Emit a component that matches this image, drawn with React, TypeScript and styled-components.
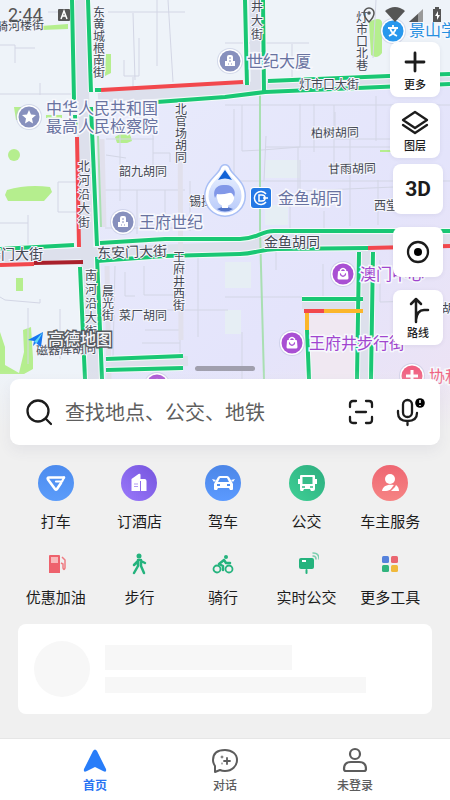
import React from "react";
import styled, { createGlobalStyle } from "styled-components";

const GlobalStyle = createGlobalStyle`
  *, *::before, *::after { box-sizing: border-box; }
  body {
    margin: 0;
    background: #f0f0f0;
    font-family: "Noto Sans CJK SC", "Noto Sans", sans-serif;
    color: #1c1c1c;
  }
  button { font: inherit; color: inherit; border: 0; padding: 0; cursor: pointer; }
`;

const Page = styled.main`
  display: flex;
  flex-direction: column;
  min-height: 100vh;
  background: #f0f0f0;
`;

const MapArea = styled.section`
  position: relative;
  height: 430px;
  overflow: hidden;
  background: #eef2fa;
  &::after {
    content: "";
    position: absolute;
    inset: auto 0 0;
    height: 60px;
    background: linear-gradient(rgba(240, 240, 240, 0), #f0f0f0);
  }
`;

const MapSvg = styled.svg`
  display: block;
  width: 100%;
  height: 100%;
`;

const StatusBar = styled.header`
  position: absolute;
  inset: 0 0 auto;
  display: flex;
  align-items: center;
  justify-content: space-between;
  height: 30px;
  padding: 0 8px;
  color: #555;
`;

const StatusGroup = styled.div<{ $gap: number }>`
  display: flex;
  align-items: center;
  gap: ${(p) => p.$gap}px;
`;

const Clock = styled.time`
  font: 18px/20px Roboto, sans-serif;
`;

const Tools = styled.div`
  position: absolute;
  top: 42px;
  right: 7px;
  display: flex;
  flex-direction: column;
  align-items: flex-end;
  gap: 13px;
`;

const ToolGroup = styled.div<{ $inset?: boolean }>`
  display: flex;
  flex-direction: column;
  gap: 6px;
  margin-right: ${(p) => (p.$inset ? 3 : 0)}px;
  margin-bottom: ${(p) => (p.$inset ? -7 : 0)}px;
`;

const Tool = styled.button<{ $tall?: boolean }>`
  display: flex;
  flex-direction: column;
  align-items: center;
  justify-content: center;
  width: 50px;
  height: ${(p) => (p.$tall ? 55 : 50)}px;
  border-radius: 8px;
  background: #fff;
  font-size: 11px;
  font-weight: 500;
  line-height: 16px;
  box-shadow: 0 1px 4px rgba(50, 50, 90, 0.08);
`;

const ToolBig = styled.span`
  font: 700 21px/26px Roboto, sans-serif;
`;

const Handle = styled.div`
  position: absolute;
  top: 366px;
  left: 50%;
  width: 60px;
  height: 5px;
  margin-left: -30px;
  border-radius: 3px;
  background: #a09fad;
`;

const Sheet = styled.div`
  position: relative;
  z-index: 1;
  display: flex;
  flex: 1;
  flex-direction: column;
  margin-top: -51px;
`;

const SearchBox = styled.form`
  display: flex;
  align-items: center;
  gap: 13px;
  height: 66px;
  margin: 0 10px;
  padding: 0 12px 0 14px;
  border-radius: 9px;
  background: #fff;
  box-shadow: 0 6px 14px rgba(70, 70, 110, 0.07);
`;

const SearchInput = styled.input`
  flex: 1;
  min-width: 0;
  padding: 0;
  border: 0;
  outline: 0;
  background: none;
  font: 20px/30px "Noto Sans CJK SC", sans-serif;
  color: #222;
  &::placeholder { color: #5e5e5e; opacity: 1; }
`;

const IconButton = styled.button`
  display: flex;
  width: 36px;
  height: 36px;
  align-items: center;
  justify-content: center;
  background: none;
`;

const Services = styled.div`
  display: grid;
  grid-template-columns: repeat(5, 1fr);
  row-gap: 19px;
  padding: 20px 18px 0 14px;
`;

const Service = styled.button`
  display: flex;
  flex-direction: column;
  align-items: center;
  background: none;
  font-size: 15px;
  line-height: 24px;
  white-space: nowrap;
`;

const Badge = styled.span<{ $fill: string }>`
  display: flex;
  width: 36px;
  height: 36px;
  margin-bottom: 8px;
  border-radius: 50%;
  background: ${(p) => p.$fill};
`;

const PlainIcon = styled.span`
  display: flex;
  width: 24px;
  height: 24px;
  margin-bottom: 9px;
`;

const Skeleton = styled.section`
  display: flex;
  align-items: center;
  gap: 15px;
  height: 90px;
  margin: 15px 18px 0;
  padding: 0 16px;
  border-radius: 8px;
  background: #fff;
`;

const SkeletonCircle = styled.div`
  flex: none;
  width: 56px;
  height: 56px;
  border-radius: 50%;
  background: #f7f7f7;
`;

const SkeletonLines = styled.div`
  display: flex;
  flex: 1;
  flex-direction: column;
  gap: 7px;
`;

const SkeletonBar = styled.div<{ $width: number; $height: number }>`
  width: ${(p) => p.$width}%;
  height: ${(p) => p.$height}px;
  background: #f7f7f7;
`;

const TabBar = styled.nav`
  display: grid;
  grid-template-columns: repeat(3, 1fr);
  height: 62px;
  margin-top: auto;
  padding: 8px 30px 0;
  border-top: 1px solid #e6e6e6;
  background: #fff;
`;

const Tab = styled.a<{ $active?: boolean }>`
  display: flex;
  flex-direction: column;
  align-items: center;
  gap: 1px;
  color: ${(p) => (p.$active ? "#2a75f3" : "#5c5c5c")};
  font-size: 12px;
  font-weight: ${(p) => (p.$active ? 700 : 500)};
  line-height: 18px;
  text-decoration: none;
`;

const Street = styled.text`
  font-size: 12px;
  fill: #454954;
  stroke: #f4f5fc;
  stroke-width: 2px;
  paint-order: stroke;
`;

const Avenue = styled(Street)`
  font-size: 14px;
`;

const Place = styled.text<{ $color?: string }>`
  font-size: 16px;
  fill: ${(p) => p.$color ?? "#6872a0"};
  stroke: #f7f8fd;
  stroke-width: 3px;
  paint-order: stroke;
`;

const Brand = styled.text`
  font-size: 16px;
  font-weight: 500;
  fill: #f4f5f8;
  stroke: #575b60;
  stroke-width: 3px;
  paint-order: stroke;
`;

function Vertical({ text, x, y, step = 12 }: { text: string; x: number; y: number; step?: number }) {
  return (
    <Street textAnchor="middle">
      {[...text].map((c, i) => (
        <tspan key={i} x={x} y={y + i * step}>{c}</tspan>
      ))}
    </Street>
  );
}

function Pin({ x, y, color, children }: { x: number; y: number; color: string; children?: React.ReactNode }) {
  return (
    <g transform={`translate(${x} ${y})`}>
      <circle r="13" fill="#b9bfdc" opacity=".5" />
      <circle r="12" fill="#fff" />
      <circle r="10.500" fill={color} />
      {children}
    </g>
  );
}

const Tower = () => (
  <>
    <path d="M-5 5V0h2v-4q0-2 2-2h2q2 0 2 2v4h2v5Z" fill="#fff" />
    <path d="M-1-3h2M-1 0h2M-2 3h1M1 3h1" stroke="#8790bd" strokeWidth="1.200" />
  </>
);
const Bag = () => (
  <>
    <path d="M-2.500-3v-1q2.500-3 5 0v1" fill="none" stroke="#fff" strokeWidth="1.500" />
    <path d="M-4-3H4q1 0 1 1l.5 6q0 1.500-1.500 1.500h-8q-1.500 0-1.500-1.500L-5-2q0-1 1-1Z" fill="#fff" />
    <path d="M-2.500 0c.5 3 4.500 3 5 0" fill="none" stroke="#a950d3" strokeWidth="1.300" strokeLinecap="round" />
  </>
);

const dropPath = "M225 167q2 0 3 3c3 7 15 12 15 26a18 18 0 0 1-36 0c0-14 12-19 15-26q1-3 3-3Z";

const green = "#19c774";
const greenRoads = [
  "M72 0 74 100M75 115 76 134M88 0 91 92M91 107 97 246M97 257 102 379M80 267 85 379",
  "M95 90H101M157 102 225 97 265 92 450 84M268 81 389 76 450 74",
  "M245 0 247 85M263 0 264 92",
  "M0 249 74 245M100 243 165 239 240 239C258 239 260 231 274 231H450",
  "M97 261 165 256 240 254C256 254 259 249 277 249L368 248",
  "M359 252 357 379M373 252 371 379M302 299H363M307 330 309 379",
  "M106 359 183 356M106 370 183 368",
];

function CityMap() {
  return (
    <MapSvg viewBox="0 0 450 430" preserveAspectRatio="xMidYMin slice" role="img" aria-label="地图">
      <defs>
        <linearGradient id="district" x1="0" y1="0" x2="1" y2="1">
          <stop offset="0" stopColor="#e8ebfb" />
          <stop offset=".6" stopColor="#e4e4fb" />
          <stop offset="1" stopColor="#eee3f3" />
        </linearGradient>
        <linearGradient id="drop" x1="0" y1="0" x2="0" y2="1">
          <stop stopColor="#eef4ff" />
          <stop offset="1" stopColor="#b7c9fa" />
        </linearGradient>
      </defs>
      <path d="M0 0H450V430H0Z" fill="#eef3f9" />
      <path d="M95 104 265 92 450 84V430H104Z" fill="url(#district)" />
      <path d="M265 160h35v18h-35ZM225 262h26v26h-26ZM225 310h16v24h-16ZM265 205h23v20h-23Z" fill="#e6eef4" />
      <path d="M310 315h45v65h-45Z" fill="#f0e8f2" />

      <g fill="#b5ee8e">
        <path d="m41 26 27-2v5l-27 1ZM106 54h5v19l-6 3ZM115 137l5-3h10l2 7-5 2h-10Z" />
        <circle cx="14" cy="155" r="6" />
        <path d="M7 190q20-6 43-3l2 5-8 9H8l-3-6ZM369 22q11-6 13 0v31q-5 7-11 2ZM16 278h7v13h-7Z" />
        <path d="M0 332l5 15v18l14 8 5-21-1-22 8-3 2 31v11l-9 5H0ZM380 150h12v2h-12ZM46 115h16v3H46ZM14 107h7v13h-5Z" />
      </g>

      <g fill="none" stroke="#d3d6e5" strokeWidth="1">
        <path d="M0 45h15v18M15 48h20M48 12h26M0 94h72M40 83v12M108 12h77M133 13l2 67M157 0v66M168 0l5 82M124 60v16h15V38M133 77v14M106 139h48M106 155l20 3M120 133v68M153 105v60M153 153h17v9M58 182h19v30H58ZM0 223h28M28 215v30M0 297l5 3 35 3v-4M28 308v56M60 309v50" />
        <path d="M225 43h84M292 44v38M376 0l-3 58M225 105h225M234 109v68M242 105v46l20-1 38-3v-43M314 104v48M334 105v70M266 136l-2 45M265 147h130M335 112v27h62M376 96v45M225 181h225M298 147v48M300 160v31l94-4M350 134v92M378 180v45M290 195v37M276 232v38M380 260v42l40-1" />
        <path d="M105 190h80M137 190v44M165 190v33M190 181v50M105 228h80M115 266l-2 91M125 272v24h10M144 266v29h42M118 310h110M145 330h35v23M198 257v80M225 297h77M324 211v21M323 264v36M242 332v47M142 343h38" />
      </g>

      <g fill="none" stroke="#dde0ec" strokeLinejoin="round">
        <path d="M80 0 87 250 93 379" strokeWidth="13" />
        <path d="M98 97 254 87 450 79M0 257 90 253 245 247 270 240H450" strokeWidth="11" />
        <path d="M254 0 256 87M366 248 364 379M106 364 188 361" strokeWidth="10" />
        <path d="M302 305H365" strokeWidth="8" />
      </g>
      <path d="M180 105 181 340M102 139 104 227M107 266 109 379" fill="none" stroke="#e1e0ec" strokeWidth="5" />
      <path d="M260 92V230L264 379M98 136 101 227" fill="none" stroke="#a9dfb2" strokeWidth="2" />

      <g fill="none" strokeLinejoin="round">
        {greenRoads.map((d) => <path key={d} d={d} stroke="#f3fbf8" strokeWidth="6" />)}
        {greenRoads.map((d) => <path key={d} d={d} stroke={green} strokeWidth="4" />)}
        <path d="M101 90 243 82M77 137 79 247M0 265 34 264M368 248 450 246M304 311H324" stroke="#f2484d" strokeWidth="4" />
        <path d="M34 263 83 262" stroke="#a9202c" strokeWidth="4" />
        <path d="M324 311H363M307 313V330" stroke="#fbb62b" strokeWidth="4" />
      </g>

      <Street x="-4" y="30" transform="rotate(-2 20 26)">骑河楼街</Street>
      <Vertical text="东黄城根南街" x={99} y={17} />
      <Vertical text="北官场胡同" x={181} y={114} />
      <Vertical text="北河沿大街" x={84} y={171} step={14} />
      <Vertical text="井大街" x={257} y={11} step={14} />
      <Vertical text="灯市口北巷" x={362} y={22} />
      <Vertical text="王府井西街" x={179} y={262} />
      <Vertical text="南河沿大街" x={91} y={280} step={14} />
      <Vertical text="晨光街" x={108} y={296} />
      <Street x="119" y="176">韶九胡同</Street>
      <Street x="299" y="89">灯市口大街</Street>
      <Street x="311" y="137" transform="rotate(-1 335 132)">柏树胡同</Street>
      <Street x="328" y="173" transform="rotate(-1 352 168)">甘雨胡同</Street>
      <Street x="374" y="210">西堂</Street>
      <Street x="189" y="206">锡拉</Street>
      <Street x="119" y="320">菜厂胡同</Street>
      <Street x="36" y="354" transform="rotate(-2 65 349)">磁器库胡同</Street>
      <Street x="442" y="313">胡</Street>
      <Avenue x="-13" y="259">安门大街</Avenue>
      <Avenue x="97" y="257" transform="rotate(-2 131 252)">东安门大街</Avenue>
      <Avenue x="264" y="247">金鱼胡同</Avenue>

      <Place x="46" y="114">中华人民共和国</Place>
      <Place x="46" y="132">最高人民检察院</Place>
      <Place x="247" y="67">世纪大厦</Place>
      <Place x="139" y="228">王府世纪</Place>
      <Place x="278" y="204">金鱼胡同</Place>
      <Place x="409" y="36" $color="#268fe0">景山学校</Place>
      <Place x="360" y="280" $color="#a145cf">澳门中心</Place>
      <Place x="309" y="349" $color="#a145cf">王府井步行街</Place>
      <Place x="429" y="382" $color="#ef5d7d">协和医院</Place>

      <Pin x={29} y={117} color="#8790bd">
        <path d="m0-7 2 4.500 5 .5-4 3.500 1 5L0 4l-4 2.500 1-5-4-3.500 5-.5Z" fill="#fff" />
      </Pin>
      <Pin x={230} y={61} color="#8790bd"><Tower /></Pin>
      <Pin x={123} y={222} color="#8790bd"><Tower /></Pin>
      <Pin x={393} y={31} color="#2998ed">
        <path d="M-5-3H5M0-6v3M-3-3c1 4 3 6 7 8M3-3c-1 4-3 6-7 8" fill="none" stroke="#fff" strokeWidth="1.800" />
      </Pin>
      <Pin x={343} y={274} color="#a950d3"><Bag /></Pin>
      <Pin x={292} y={343} color="#a950d3"><Bag /></Pin>
      <Pin x={157} y={385} color="#a950d3"><Bag /></Pin>
      <Pin x={412} y={376} color="#f06080">
        <path d="M-6 0H6M0-6V6" stroke="#fff" strokeWidth="3" />
      </Pin>

      <g transform="translate(261 198)">
        <rect x="-11" y="-11" width="22" height="22" rx="4" fill="#fff" />
        <rect x="-10" y="-10" width="20" height="20" rx="3" fill="#2579e5" />
        <path d="M5-4A6.500 6.500 0 1 0 5 4M-2-3V3H1C5 3 5-3 1-3ZM2 0H7" fill="none" stroke="#fff" strokeWidth="1.500" />
      </g>

      <path d={dropPath} fill="#fff" stroke="#a9bff5" strokeWidth="6" />
      <path d={dropPath} fill="url(#drop)" stroke="#fff" strokeWidth="3" />
      <path d="m225 170 7 10q-7-3-14 0Z" fill="#1263d6" />
      <path d="M217 209q8-4 16 0-8 5-16 0Z" fill="#5576c9" />
      <path d="M217 193h17v6q-2 7-9 7t-8-8Z" fill="#fff" />
      <path d="M215 198c-3-8 2-14 10-13 7-1 12 6 9 12q-2-5-5-4-7 2-12 1Z" fill="#8298e8" />
      <path d="M222 204h6v4h-6Z" fill="#fff" />

      <path d="m28 340 15-8-2 15-5-4-3 3 1-5Z" fill="#1676f2" />
      <path d="m34 342 9-10-6 11Z" fill="#62d9f4" />
      <Brand x="48" y="345">高德地图</Brand>
    </MapSvg>
  );
}

const line = { fill: "none", stroke: "currentColor", strokeLinecap: "round", strokeLinejoin: "round" } as const;

const services = [
  {
    label: "打车", fill: "linear-gradient(#4c8bee, #5b9cfa)",
    icon: <><path d="M26 12.500H11q-2 0-1 2l7 9.500q1 1 2 0l4-6" {...line} strokeWidth="2.600" /><path d="m26 12.500-2 4h-6" {...line} strokeWidth="2.200" /></>,
  },
  {
    label: "订酒店", fill: "linear-gradient(225deg, #7554dd, #9a79fb)",
    icon: <><path d="M10.500 26V14l7-5q2-1 2 1v4h4q2 0 2 2v10Z" fill="#fff" /><path d="M19.500 16v10" stroke="#8d6bec" /><path d="M13 19h4M13 21.500h4" stroke="#b19af3" /></>,
  },
  {
    label: "驾车", fill: "linear-gradient(#4c86e7, #5b9aff)",
    icon: <><path d="M10 17l3-5q1-1 2-1h7q1 0 2 1l3 5 1 2v5q0 1-1 1h-2l-1-2H13l-1 2h-2q-1 0-1-1v-5ZM7 14l4 1-2 2ZM30 14l-4 1 2 2Z" fill="#fff" /><path d="m13 17 2-4h7l2 4Z" fill="#508ff0" /><path d="M12 20h3M22 20h3" stroke="#508ff0" strokeWidth="2" /></>,
  },
  {
    label: "公交", fill: "linear-gradient(225deg, #2cad7e, #3fd096)",
    icon: <><path d="M12 10h13q1 0 1 1v13q0 2-2 2h-2l-1-2h-6l-1 2h-2q-1 0-1-2V11q0-1 1-1ZM9 14h2v5H9ZM26 14h2v5h-2Z" fill="#fff" /><path d="M13.500 12h10v7h-10Z" fill="#37bd8a" /><path d="M13 22h3M21 22h3" stroke="#37bd8a" strokeWidth="1.500" /></>,
  },
  {
    label: "车主服务", fill: "linear-gradient(#ee6672, #f68484)",
    icon: <><circle cx="18" cy="14" r="5" fill="#fff" /><path d="M10 26c1-5 5-7 12-6-2 2-3 6-8 6ZM19 26l4-4 1-2q3 2 3 6Z" fill="#fff" /></>,
  },
];

const tools = [
  {
    label: "优惠加油",
    icon: <><path d="M6 3h9q1 0 1 1v17H5V4q0-1 1-1Z" fill="#ee626d" /><path d="M7 5h7v6H7Z" fill="#f8b9bb" /><path d="m18 5 3 3v8q-1 3-2 0v-4l-2-1" fill="none" stroke="#ee7c83" strokeWidth="1.500" /></>,
  },
  {
    label: "步行",
    icon: <><circle cx="12" cy="4" r="2.500" fill="#24b37d" /><path d="M11 8h3v6l3 7M11 8v6l-4 7M11 9l-4 4M14 9l4 2" {...line} stroke="#24b37d" strokeWidth="2.500" /></>,
  },
  {
    label: "骑行",
    icon: <><circle cx="6" cy="17" r="3.500" {...line} stroke="#24b37d" strokeWidth="1.800" /><circle cx="18" cy="17" r="3.500" {...line} stroke="#24b37d" strokeWidth="1.800" /><circle cx="15" cy="5" r="2" fill="#24b37d" /><path d="m13 8-5 4 4 2v4M13 8l2 3h4" {...line} stroke="#24b37d" strokeWidth="2.500" /></>,
  },
  {
    label: "实时公交",
    icon: <><rect x="4" y="6" width="15" height="11" rx="2" fill="#24b37d" /><path d="M7 9h4" stroke="#fff" strokeWidth="2" /><path d="M11.500 18v3" {...line} stroke="#24b37d" strokeWidth="2" /><path d="M18 4q3 0 3 3M18 1q6 0 6 6" {...line} stroke="#7bcfaf" strokeWidth="1.500" /></>,
  },
  {
    label: "更多工具",
    icon: <><rect x="4" y="4" width="7" height="7" rx="1.500" fill="#5682dc" /><rect x="13" y="4" width="7" height="7" rx="1.500" fill="#ea6670" /><rect x="4" y="13" width="7" height="7" rx="1.500" fill="#31b47e" /><rect x="13" y="13" width="7" height="7" rx="1.500" fill="#f0b93c" /></>,
  },
];

export default function App() {
  return (
    <Page>
      <GlobalStyle />
      <MapArea>
        <CityMap />
        <StatusBar>
          <StatusGroup $gap={15}>
            <Clock>2:44</Clock>
            <svg width="12" height="12" viewBox="0 0 12 12" aria-hidden="true">
              <rect width="12" height="12" rx="1" fill="#555" />
              <path d="m3 10 3-8 3 8M4 7h4" fill="none" stroke="#fff" strokeWidth="1.500" />
            </svg>
          </StatusGroup>
          <StatusGroup $gap={0}>
            <svg width="80" height="18" viewBox="0 0 80 18" aria-hidden="true">
              <path d="M7 2a5 5 0 0 1 5 5c0 4-5 9-5 9S2 11 2 7a5 5 0 0 1 5-5Z" fill="none" stroke="#555" strokeWidth="1.500" />
              <circle cx="7" cy="7" r="1.800" fill="#555" />
              <path d="M23 5q10-8 20 0L33 16Z" fill="#555" />
              <path d="M47 16 61 3v13Z" fill="#999" />
              <path d="m47 16 9-8v8Z" fill="#555" />
              <path d="M71 3h2V1h4v2h2v13h-8Z" fill="#555" />
              <path d="m76 5-3 5h2v4l3-5h-2Z" fill="#fff" />
            </svg>
          </StatusGroup>
        </StatusBar>
        <Tools>
          <ToolGroup $inset>
            <Tool $tall>
              <svg width="28" height="28" viewBox="0 0 28 28" aria-hidden="true"><path d="M14 5v18M5 14h18" {...line} strokeWidth="2.800" /></svg>
              更多
            </Tool>
            <Tool $tall>
              <svg width="28" height="28" viewBox="0 0 28 28" aria-hidden="true"><path d="m14 3 12 8-12 8L2 11ZM2 16l12 8 12-8" {...line} strokeWidth="2.300" /></svg>
              图层
            </Tool>
          </ToolGroup>
          <Tool><ToolBig>3D</ToolBig></Tool>
          <Tool aria-label="定位">
            <svg width="26" height="26" viewBox="0 0 26 26" aria-hidden="true"><circle cx="13" cy="13" r="10" {...line} strokeWidth="2.300" /><circle cx="13" cy="13" r="4" /></svg>
          </Tool>
          <Tool $tall>
            <svg width="28" height="28" viewBox="0 0 28 28" aria-hidden="true"><path d="M12 26V3M7 8l5-5 5 5M12 24q1-10 8-10h4" {...line} strokeWidth="2.500" /></svg>
            路线
          </Tool>
        </Tools>
        <Handle />
      </MapArea>

      <Sheet>
        <SearchBox onSubmit={(e) => e.preventDefault()}>
          <svg width="28" height="28" viewBox="0 0 28 28" aria-hidden="true"><circle cx="14" cy="13" r="10.500" {...line} strokeWidth="2.300" /><path d="m22 21 5 5" {...line} strokeWidth="2.300" /></svg>
          <SearchInput aria-label="搜索" placeholder="查找地点、公交、地铁" />
          <IconButton type="button" aria-label="扫一扫">
            <svg width="26" height="26" viewBox="0 0 26 26" aria-hidden="true"><path d="M2 8V5q0-3 3-3h3M18 2h3q3 0 3 3v3M24 18v3q0 3-3 3h-3M8 24H5q-3 0-3-3v-3M8 13h10" {...line} strokeWidth="2.300" /></svg>
          </IconButton>
          <IconButton type="button" aria-label="语音搜索">
            <svg width="30" height="30" viewBox="0 0 30 30" aria-hidden="true"><rect x="8" y="3" width="9" height="17" rx="4.500" {...line} strokeWidth="2.300" /><path d="M3 14v2q0 8 9.500 8t9.500-8M12.500 24v4" {...line} strokeWidth="2.300" /><circle cx="25" cy="6" r="4.800" /><path d="M25 3v3M25 8v1" stroke="#fff" strokeWidth="1.500" /></svg>
          </IconButton>
        </SearchBox>

        <Services>
          {services.map((s) => (
            <Service key={s.label}>
              <Badge $fill={s.fill}><svg width="36" height="36" viewBox="0 0 36 36" color="#fff" aria-hidden="true">{s.icon}</svg></Badge>
              {s.label}
            </Service>
          ))}
          {tools.map((t) => (
            <Service key={t.label}>
              <PlainIcon><svg width="24" height="24" viewBox="0 0 24 24" aria-hidden="true">{t.icon}</svg></PlainIcon>
              {t.label}
            </Service>
          ))}
        </Services>

        <Skeleton aria-busy="true">
          <SkeletonCircle />
          <SkeletonLines>
            <SkeletonBar $width={60} $height={25} />
            <SkeletonBar $width={84} $height={16} />
          </SkeletonLines>
        </Skeleton>

        <TabBar>
          <Tab href="#home" $active aria-current="page">
            <svg width="28" height="28" viewBox="0 0 28 28" aria-hidden="true"><path d="M12 4q2-3 4 0l9 18q1 4-3 2l-8-4-8 4q-4 2-3-2Z" fill="#287df9" /></svg>
            首页
          </Tab>
          <Tab href="#chat">
            <svg width="28" height="28" viewBox="0 0 28 28" aria-hidden="true"><path d="M2 13C2 6 7 3 14 3s12 4 12 10-5 11-12 11q-3 0-5-1l-5 2v-6q-2-3-2-6Z" {...line} strokeWidth="2" /><path d="M16 11v6M13 14h6" {...line} strokeWidth="1.800" /><path d="M11 9v2M10 10h2M11 16v1" {...line} strokeWidth="1" /></svg>
            对话
          </Tab>
          <Tab href="#account">
            <svg width="28" height="28" viewBox="0 0 28 28" aria-hidden="true"><circle cx="14" cy="7" r="5" {...line} strokeWidth="2.200" /><path d="M3 22q0-7 7-7h8q7 0 7 7 0 2-2 2H5q-2 0-2-2Z" {...line} strokeWidth="2.200" /></svg>
            未登录
          </Tab>
        </TabBar>
      </Sheet>
    </Page>
  );
}
